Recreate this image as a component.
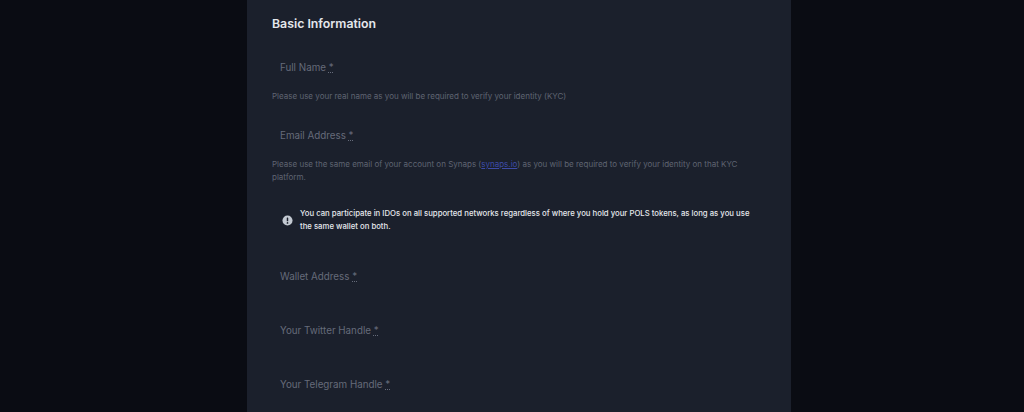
<div class="page">
  <main class="panel">
    <h2>Basic Information</h2>

    <div class="field first">
      <div class="input"><span>Full Name <u>*</u></span></div>
      <p class="help">Please use your real name as you will be required to verify your identity (KYC)</p>
    </div>

    <div class="field second">
      <div class="input"><span>Email Address <u>*</u></span></div>
      <p class="help">Please use the same email of your account on Synaps (<a href="#top">synaps.io</a>) as you will be required to verify your identity on that KYC platform.</p>
    </div>

    <div class="notice">
      <svg viewBox="0 0 12 12" width="11" height="11" aria-hidden="true">
        <circle cx="6" cy="6" r="5.5" fill="#c3c9d2" />
        <rect x="5.2" y="2.6" width="1.6" height="4.2" rx="0.6" fill="#1b202c" />
        <circle cx="6" cy="8.6" r="0.95" fill="#1b202c" />
      </svg>
      <p>You can participate in IDOs on all supported networks regardless of where you hold your POLS tokens, as long as you use the same wallet on both.</p>
    </div>

    <div class="input plain wallet"><span>Wallet Address <u>*</u></span></div>
    <div class="input plain"><span>Your Twitter Handle <u>*</u></span></div>
    <div class="input plain"><span>Your Telegram Handle <u>*</u></span></div>
  </main>
</div>

<style>
  :global(body) {
    margin: 0;
    background: #0a0c13;
  }
  .page {
    height: 412px;
    overflow: hidden;
    display: flex;
    padding-left: 247px;
    font-family: Inter, "Liberation Sans", sans-serif;
    background: #0a0c13;
  }
  .panel {
    width: 544px;
    flex: none;
    box-sizing: border-box;
    padding: 15px 25px 0;
    background: #1b202c;
  }
  h2 {
    margin: 0;
    font-size: 12.3px;
    line-height: 17px;
    font-weight: 600;
    color: #e4e7ec;
  }
  .field.first {
    margin-top: 18px;
  }
  .field.second {
    margin-top: 15px;
  }
  .input {
    height: 34px;
    box-sizing: border-box;
    display: flex;
    align-items: center;
    padding-left: 8px;
    font-size: 9.8px;
    color: #666b7a;
  }
  .input u {
    text-decoration-style: dotted;
  }
  .help {
    margin: 6px 0 0;
    font-size: 8px;
    line-height: 13px;
    color: #5f6472;
  }
  .help a {
    color: #3d4ba8;
  }
  .notice {
    margin-top: 23px;
    display: flex;
    align-items: center;
    gap: 7px;
    padding-left: 10px;
    padding-right: 10px;
  }
  .notice svg {
    flex: none;
  }
  .notice p {
    margin: 0;
    font-size: 7.75px;
    line-height: 13px;
    font-weight: 500;
    color: #e6e8ec;
  }
  .plain {
    height: 54px;
  }
  .plain.wallet {
    margin-top: 16px;
  }
</style>
